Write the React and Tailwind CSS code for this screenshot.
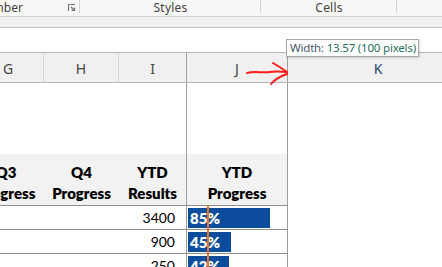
import React from "react"

const rows = [
  { ytd: "3400", pct: 85 },
  { ytd: "900", pct: 45 },
  { ytd: "250", pct: 42 },
]

const ui = { fontFamily: '"Noto Sans", "Open Sans", sans-serif' }
const gill = { fontFamily: 'Lato, "Noto Sans", sans-serif' }

function Launcher() {
  return (
    <svg width="8" height="8" viewBox="0 0 8 8" className="text-[#6b6b6b]">
      <path d="M0.5 7 V0.5 H7" fill="none" stroke="currentColor" strokeWidth="1" />
      <path d="M3 3 L6.5 6.5 M6.5 3.5 V6.5 H3.5" fill="none" stroke="currentColor" strokeWidth="1.2" />
    </svg>
  )
}

function Ribbon() {
  return (
    <div style={ui} className="flex h-[17px] shrink-0 border-b border-[#d2d2d2] bg-[#f8f8f8] text-[12px] leading-[16px] text-[#444]">
      <div className="relative flex w-[80px] shrink-0 items-start overflow-hidden">
        <span className="ml-[-24px]">Number</span>
        <span className="absolute left-[68px] top-[4px]"><Launcher /></span>
        <span className="absolute right-0 top-0 h-[13px] w-px bg-[#d6d6d6]" />
      </div>
      <div className="relative w-[181px] shrink-0 text-center tracking-[0.2px]">
        Styles
        <span className="absolute right-0 top-0 h-[13px] w-px bg-[#d6d6d6]" />
      </div>
      <div className="relative w-[136px] shrink-0 text-center tracking-[0.2px]">
        Cells
        <span className="absolute right-0 top-0 h-[13px] w-px bg-[#d6d6d6]" />
      </div>
    </div>
  )
}

function ColumnHeaders() {
  const cols = [
    { l: "G", w: "w-[44px]", cls: "justify-start pl-[3px] border-r border-[#d8d8d8]" },
    { l: "H", w: "w-[75px]", cls: "justify-center border-r border-[#d8d8d8]" },
    { l: "I", w: "w-[68px]", cls: "justify-center border-r border-[#9e9e9e]" },
    { l: "J", w: "w-[101px]", cls: "justify-center border-r border-[#9e9e9e]" },
    { l: "K", w: "w-[180px]", cls: "justify-center text-[#25497a]" },
  ]
  return (
    <div style={ui} className="flex h-[30px] shrink-0 border-b border-[#b9b9b9] bg-[#f0f0f0] text-[14px] text-[#444]">
      {cols.map((c) => (
        <div key={c.l} className={`flex shrink-0 items-center pt-[2px] ${c.w} ${c.cls}`}>
          {c.l}
        </div>
      ))}
    </div>
  )
}

function Sheet() {
  return (
    <div style={gill} className="relative flex-1 bg-white text-black">
      {/* empty rows above table */}
      <div className="flex h-[71px]">
        <div className="w-[187px] shrink-0 border-r border-[#9e9e9e]" />
        <div className="w-[101px] shrink-0 border-r border-[#9e9e9e]" />
      </div>
      {/* table header */}
      <div className="flex h-[52px] text-[15px] font-extrabold leading-[21px]">
        <div className="flex w-[288px] shrink-0 border-b border-[#8e8e8e] bg-[#f2f2f2]">
          <div className="w-[44px] shrink-0 overflow-hidden pt-[8px]">
            <div className="ml-[-38px] w-[88px] text-center">Q3<br />Progress</div>
          </div>
          <div className="w-[75px] shrink-0 pt-[8px] text-center">Q4<br />Progress</div>
          <div className="w-[68px] shrink-0 border-r border-[#9e9e9e] pt-[8px] text-center">YTD<br />Results</div>
          <div className="w-[101px] shrink-0 border-r border-[#9e9e9e] pt-[8px] text-center">YTD<br />Progress</div>
        </div>
      </div>
      {rows.map((r) => (
        <div key={r.ytd} className="flex h-[24px]">
          <div className="flex w-[288px] shrink-0 border-b border-[#8e8e8e]">
            <div className="w-[119px] shrink-0" />
            <div className="flex w-[68px] shrink-0 items-center justify-end border-r border-[#9e9e9e] pr-[11px] text-[14px]">
              {r.ytd}
            </div>
            <div className="w-[101px] shrink-0 border-r border-[#9e9e9e] pl-px pt-[2px]">
              <div
                className="flex h-[20px] items-center bg-[#0b4c9c] pl-[2px] text-[15px] font-extrabold text-white"
                style={{ width: Math.round(r.pct * 0.965) }}
              >
                {r.pct}%
              </div>
            </div>
          </div>
        </div>
      ))}
      <div className="pointer-events-none absolute left-[207px] top-[122px] bottom-0 w-[2px] bg-[#f07222]" />
    </div>
  )
}

export default function App() {
  return (
    <div className="relative flex h-[267px] w-[442px] flex-col overflow-hidden bg-white">
      <Ribbon />
      <div className="h-[11px] shrink-0 border-b border-[#c4c4c4] bg-[#f0f0f0]" />
      <div className="h-[25px] shrink-0 border-b border-[#b3b3b3] bg-white" />
      <ColumnHeaders />
      <Sheet />

      {/* tooltip */}
      <div
        style={ui}
        className="absolute left-[286px] top-[39px] flex h-[18px] w-[133px] items-center whitespace-nowrap border border-[#a8a8a8] bg-white pl-[3px] text-[11.5px] leading-none tracking-[-0.2px] shadow-[1px_1px_2px_rgba(0,0,0,0.15)]"
      >
        <span className="text-[#3f5866]">Width:&nbsp;</span>
        <span className="text-[#25705c]">13.57 (100 pixels)</span>
      </div>

      {/* hand drawn arrow */}
      <svg className="pointer-events-none absolute left-[240px] top-[58px]" width="52" height="32" viewBox="0 0 52 32">
        <path d="M7 15 C14 13, 22 15, 30 14 S42 14, 47 14" fill="none" stroke="#ff1a1a" strokeWidth="2" strokeLinecap="round" />
        <path d="M33 5 C38 8, 43 11, 47 14" fill="none" stroke="#ff1a1a" strokeWidth="2" strokeLinecap="round" />
        <path d="M31 26 C35 21, 41 18, 47 16" fill="none" stroke="#ff1a1a" strokeWidth="2" strokeLinecap="round" />
      </svg>
    </div>
  )
}
